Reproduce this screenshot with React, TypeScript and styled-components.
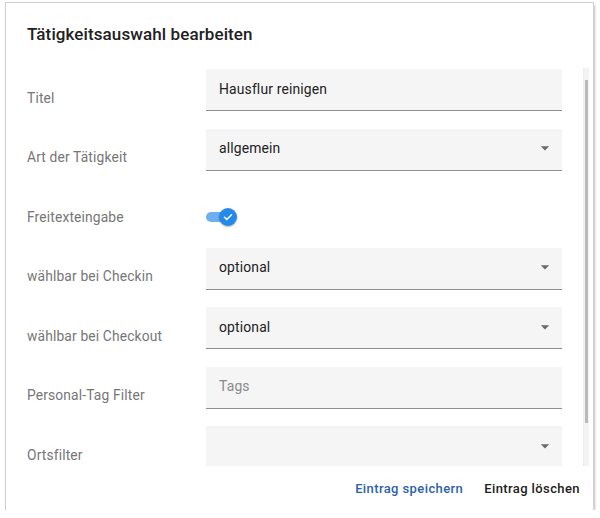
import React from 'react';
import styled, { createGlobalStyle } from 'styled-components';

const GlobalStyle = createGlobalStyle`
  html, body {
    margin: 0;
    padding: 0;
    background: #ffffff;
  }
  body {
    font-family: Roboto, 'Liberation Sans', Arial, sans-serif;
  }
`;

type FieldDef =
  | { kind: 'text'; label: string; value?: string; placeholder?: string }
  | { kind: 'select'; label: string; value?: string }
  | { kind: 'switch'; label: string; checked: boolean };

const fields: FieldDef[] = [
  { kind: 'text', label: 'Titel', value: 'Hausflur reinigen' },
  { kind: 'select', label: 'Art der Tätigkeit', value: 'allgemein' },
  { kind: 'switch', label: 'Freitexteingabe', checked: true },
  { kind: 'select', label: 'wählbar bei Checkin', value: 'optional' },
  { kind: 'select', label: 'wählbar bei Checkout', value: 'optional' },
  { kind: 'text', label: 'Personal-Tag Filter', placeholder: 'Tags' },
  { kind: 'select', label: 'Ortsfilter' },
];

const DropArrow = () => (
  <ArrowIcon viewBox="0 0 24 24" width="20" height="20">
    <path d="M7 10l5 5 5-5z" fill="currentColor" />
  </ArrowIcon>
);

const Toggle: React.FC<{ checked: boolean }> = ({ checked }) => (
  <SwitchTrack checked={checked}>
    <SwitchThumb checked={checked}>
      {checked && (
        <svg viewBox="0 0 24 24" width="12" height="12">
          <path d="M5 12.5l4.5 4.5L19 7.5" fill="none" stroke="#fff" strokeWidth="3" strokeLinecap="round" strokeLinejoin="round" />
        </svg>
      )}
    </SwitchThumb>
  </SwitchTrack>
);

export default function App() {
  return (
    <>
      <GlobalStyle />
      <Page>
        <Dialog>
          <Title>Tätigkeitsauswahl bearbeiten</Title>
          <Body>
            <FormContent>
              {fields.map((f) => (
                <Row key={f.label}>
                  <Label>{f.label}</Label>
                  <FieldCell centered={f.kind === 'switch'}>
                    {f.kind === 'switch' ? (
                      <Toggle checked={f.checked} />
                    ) : (
                      <FilledField>
                        {f.kind === 'text' && f.value && <FieldValue>{f.value}</FieldValue>}
                        {f.kind === 'text' && !f.value && <Placeholder>{f.placeholder}</Placeholder>}
                        {f.kind === 'select' && <FieldValue>{f.value ?? ''}</FieldValue>}
                        {f.kind === 'select' && <DropArrow />}
                      </FilledField>
                    )}
                  </FieldCell>
                </Row>
              ))}
            </FormContent>
            <ScrollTrack>
              <ScrollThumb />
            </ScrollTrack>
          </Body>
          <Footer>
            <TextButton primary>Eintrag speichern</TextButton>
            <TextButton>Eintrag löschen</TextButton>
          </Footer>
        </Dialog>
      </Page>
    </>
  );
}

const Page = styled.div`
  padding: 3px 0 0 6px;
`;

const Dialog = styled.div`
  width: 587px;
  height: 507px;
  box-sizing: border-box;
  background: #fff;
  display: flex;
  flex-direction: column;
  box-shadow: 0 0 0 1px #cfcfcf, 1px 2px 3px rgba(0, 0, 0, 0.45);
`;

const Title = styled.h2`
  margin: 0;
  height: 65px;
  flex: none;
  box-sizing: border-box;
  padding: 0 0 3px 21px;
  display: flex;
  align-items: center;
  font-size: 17px;
  font-weight: 500;
  color: #212121;
  letter-spacing: 0.1px;
`;

const Body = styled.div`
  height: 398px;
  flex: none;
  display: flex;
  padding-right: 4px;
`;

const FormContent = styled.div`
  flex: 1;
  overflow: hidden;
  padding: 0 21px 0 21px;
`;

const ScrollTrack = styled.div`
  width: 6px;
  flex: none;
  background: #f3f3f3;
  border-left: 1px solid #ececec;
  box-sizing: border-box;
  padding: 12px 1px 0 1px;
`;

const ScrollThumb = styled.div`
  height: 343px;
  background: #bababa;
`;

const Row = styled.div`
  display: grid;
  grid-template-columns: 179px 1fr;
  height: 59.5px;
  align-items: center;
`;

const Label = styled.div`
  font-size: 13.8px;
  color: #767676;
  letter-spacing: 0.15px;
`;

const FieldCell = styled.div<{ centered?: boolean }>`
  height: 100%;
  display: flex;
  align-items: ${({ centered }) => (centered ? 'center' : 'flex-start')};
  padding-top: ${({ centered }) => (centered ? '0' : '1px')};
  box-sizing: border-box;
`;

const FilledField = styled.div`
  flex: 1;
  height: 42px;
  box-sizing: border-box;
  background: #f5f5f5;
  border-bottom: 1px solid #8f8f8f;
  padding: 0 7px 2px 13px;
  display: flex;
  align-items: center;
`;

const FieldValue = styled.span`
  font-size: 13.9px;
  color: #222;
  letter-spacing: 0.15px;
`;

const Placeholder = styled.span`
  font-size: 13.9px;
  color: #8a8a8a;
  letter-spacing: 0.15px;
`;

const ArrowIcon = styled.svg`
  margin-left: auto;
  color: #6a6a6a;
  flex: none;
`;

const SwitchTrack = styled.div<{ checked: boolean }>`
  position: relative;
  width: 26px;
  height: 10px;
  border-radius: 5px;
  margin-top: 1px;
  background: ${({ checked }) => (checked ? '#6cb0f0' : '#bdbdbd')};
`;

const SwitchThumb = styled.div<{ checked: boolean }>`
  position: absolute;
  top: -4px;
  left: ${({ checked }) => (checked ? '13px' : '-4px')};
  width: 18px;
  height: 18px;
  border-radius: 50%;
  background: ${({ checked }) => (checked ? '#2489e8' : '#fafafa')};
  box-shadow: 0 1px 2px rgba(0, 0, 0, 0.3);
  display: flex;
  align-items: center;
  justify-content: center;
`;

const Footer = styled.div`
  flex: 1;
  display: flex;
  justify-content: flex-end;
  align-items: center;
  gap: 5px;
  padding: 0 5px 0 0;
`;

const TextButton = styled.button<{ primary?: boolean }>`
  border: none;
  background: none;
  font-family: inherit;
  font-size: 13px;
  font-weight: 500;
  letter-spacing: 0.4px;
  padding: 6px 8px;
  color: ${({ primary }) => (primary ? '#2b63a6' : '#212121')};
  cursor: pointer;
`;
